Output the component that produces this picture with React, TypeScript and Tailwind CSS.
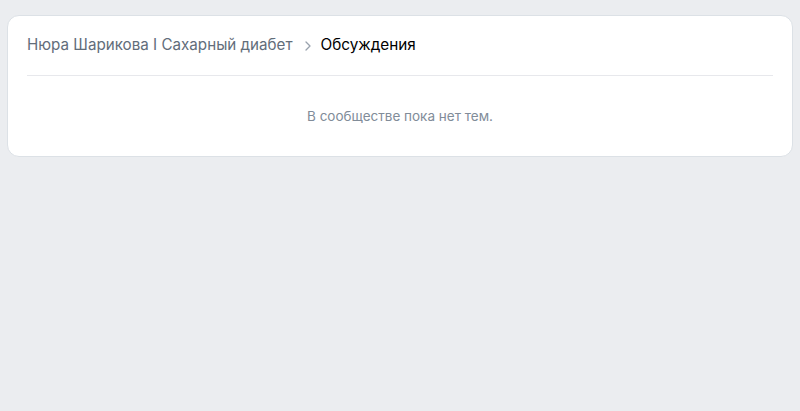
import React from 'react';

const Chevron = () => (
  <svg width="8" height="12" viewBox="0 0 8 12" fill="none" className="ml-[11px] mr-[9px] text-[#99a2ad]">
    <path d="M2 2l4 4-4 4" stroke="currentColor" strokeWidth="1.3" strokeLinecap="round" strokeLinejoin="round" />
  </svg>
);

export default function App() {
  return (
    <div
      className="min-h-[411px] bg-[#ebedf0] pt-[15px] px-[7px]"
      style={{ fontFamily: 'Inter, "Noto Sans", sans-serif' }}
    >
      <div className="bg-white rounded-[12px] border border-[#dce1e6] px-[19px]">
        {/* Header with breadcrumbs */}
        <div className="h-[60px] flex items-center border-b border-[#e7e8ec]">
          <span className="text-[15.2px] text-[#626d7a]">Нюра Шарикова I Сахарный диабет</span>
          <Chevron />
          <span className="text-[15.3px] text-black">Обсуждения</span>
        </div>
        {/* Empty state */}
        <div className="h-[80px] flex items-center justify-center">
          <span className="text-[13.5px] text-[#818c99]">В сообществе пока нет тем.</span>
        </div>
      </div>
    </div>
  );
}
